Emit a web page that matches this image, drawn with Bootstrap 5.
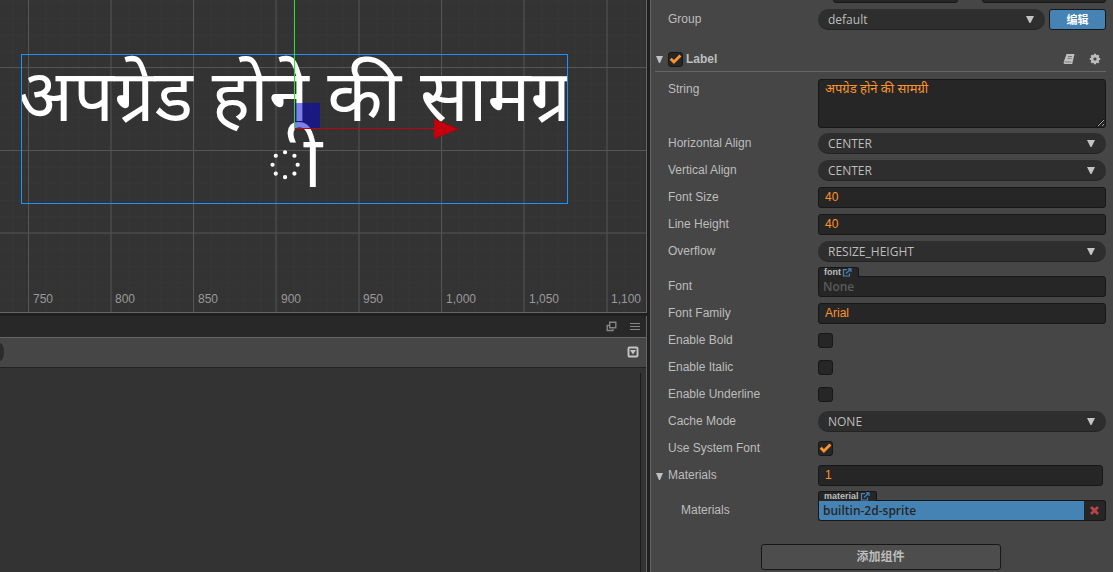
<!DOCTYPE html>
<html lang="zh-CN">
<head>
<meta charset="utf-8">
<meta name="viewport" content="width=device-width, initial-scale=1">
<title>Label inspector</title>
<link href="https://cdn.jsdelivr.net/npm/bootstrap@5.3.0/dist/css/bootstrap.min.css" rel="stylesheet">
<script src="https://cdn.jsdelivr.net/npm/bootstrap@5.3.0/dist/js/bootstrap.bundle.min.js"></script>
<style>
  :root { --line:#656565; --panel:#464646; --field:#262626; --edge:#171717; --orange:#fd942b; --blue:#4683b5; --txt:#bdbdbd; }
  body { background:#1e1f1e; color:var(--txt); font:12px/20px "Liberation Sans", Arial, sans-serif; }
  .workspace { gap:3px; }
  .left-col { gap:3px; }
  .scene { background:#333; border:solid var(--line); border-width:0 1px 1px 0; min-height:200px; }
  .scene svg { inset:0; }
  .scene text { font:12px "Liberation Sans", Arial, sans-serif; fill:#999; }
  .label-node { left:21px; top:54px; width:547px; height:150px; padding-top:15px; border:1px solid #1e90ff; color:#fff; }
  .label-node p { font:72px/66px "Noto Sans Devanagari", "Noto Sans", sans-serif; }
  .console-pane { flex:0 0 256px; border-right:1px solid var(--line); }
  .tab-strip { height:22px; background:#282828; border-bottom:1px solid var(--line); padding-right:6px; gap:13px; }
  .tool-strip { height:30px; background:var(--panel); border-bottom:1px solid #222; padding:0 7px 2px 0; }
  .pill-end { width:4px; height:18px; background:#2b2b2b; border-radius:0 4px 4px 0 / 0 9px 9px 0; }
  .log-area { background:#333; padding:5px 5px 0 0; }
  .log-area div { border-right:1px solid #1c1c1c; }
  .icon-btn { border:0; padding:0; background:none; display:flex; color:#a5a5a5; }
  .inspector { flex:0 0 463px; background:var(--panel); border-left:1px solid var(--line); padding:0 7px 0 4px; }
  .prop { display:grid; grid-template-columns:150px minmax(0,1fr); padding-left:13px; margin-bottom:6px; align-items:start; }
  .prop > label { min-height:21px; }
  .prop.tall { margin-bottom:5px; }
  .prop.sub > label { padding-left:13px; }
  .prop.tabbed { margin-top:-1px; }
  .prop.tabbed > label { padding-top:9px; }
  .field { display:block; width:100%; height:21px; padding:0 6px 1px; background:var(--field); border:1px solid var(--edge); border-radius:3px; color:var(--orange); line-height:18px; }
  textarea.field { height:49px; resize:vertical; padding:1px 6px; font-family:"Noto Sans Devanagari", "Noto Sans", sans-serif; font-size:13px; }
  .picker { display:block; width:100%; height:21px; padding:1px 10px 0; appearance:none; border:0; border-bottom:1px solid #232323; border-radius:11px; color:var(--txt); font:12px/20px "Open Sans", sans-serif;
    background:#2e2e2e url("data:image/svg+xml,%3Csvg xmlns='http://www.w3.org/2000/svg' width='8' height='7'%3E%3Cpath fill='%23c4c4c4' d='M0 0h8L4.500 7H3.500z'/%3E%3C/svg%3E") no-repeat right 11px top 7px; }
  .tick { display:block; margin:3px 0 0; width:15px; height:15px; flex:none; appearance:none; background:var(--field) center/13px no-repeat; border:1px solid var(--edge); border-radius:3px; }
  .tick:checked { background-image:url("data:image/svg+xml,%3Csvg xmlns='http://www.w3.org/2000/svg' viewBox='0 0 13 13'%3E%3Cpath fill='none' stroke='%23fd942b' stroke-width='2.800' d='M1.700 5.800l3.200 3.200L11.400 2.500'/%3E%3C/svg%3E"); }
  .edit-btn { width:57px; height:21px; border:1px solid var(--edge); border-radius:3px; background:var(--blue); color:#fff; font:bold 11px/18px "Liberation Sans", "Noto Sans CJK SC", sans-serif; }
  .cut-row { height:3px; padding-left:178px; gap:24px; margin-bottom:6px; }
  .comp-head { height:25px; border-bottom:1px solid var(--line); margin:17px 0 7px; }
  .arrow { width:9px; margin:0 4px 0 0; }
  .comp-head .tick { margin:0 3px 0 0; }
  .head-icons { gap:14px; padding-right:5px; }
  .array-size { padding:0 3px 0 0; }
  .asset-tab { width:max-content; height:10px; padding:0 6px 0 5px; background:var(--field); border:1px solid var(--edge); border-bottom:0; border-radius:3px 3px 0 0; font:bold 9px/8px "Liberation Sans", Arial, sans-serif; gap:1px; margin-bottom:-1px; position:relative; }
  .asset { font:600 12px/19px "Open Sans", sans-serif; padding:0 4px; border-radius:0 3px 3px 3px; }
  .asset::placeholder { color:#5b5b5b; opacity:1; }
  .asset.filled { background:var(--blue); color:#262626; border-radius:0 0 0 3px; border-right:0; }
  .clear-btn { width:22px; height:21px; flex:none; border:1px solid var(--edge); border-left:0; border-radius:0 3px 3px 0; background:var(--field); padding:0; display:flex; align-items:center; justify-content:center; }
  .add-btn { width:240px; height:26px; margin:23px auto 0; border:1px solid var(--edge); border-radius:3px; background:#4d4d4d; color:var(--txt); font:bold 12px/24px "Liberation Sans", "Noto Sans CJK SC", sans-serif; }
</style>
</head>
<body>
<div class="workspace d-flex vh-100 overflow-hidden">
  <main class="left-col d-flex flex-column flex-grow-1 overflow-hidden">
    <section class="scene position-relative flex-grow-1 overflow-hidden" aria-label="Scene">
      <svg class="position-absolute w-100 h-100" aria-hidden="true">
        <defs>
          <pattern id="minor" x="28.500" y="1.500" width="16.530" height="16.530" patternUnits="userSpaceOnUse"><path d="M.5 0V17M0 .5H17" stroke="#363636"/></pattern>
        </defs>
        <rect width="100%" height="100%" fill="url(#minor)"/>
        <path d="M28.500 0V900M111 0V900M193.500 0V900M276 0V900M359 0V900M441.500 0V900M524 0V900M607 0V900M0 67.500H2000M0 150.500H2000M0 233H2000" stroke="#555" fill="none"/>
      </svg>
      <svg class="position-absolute w-100 h-100">
        <text x="33" y="303">750</text><text x="115" y="303">800</text><text x="198" y="303">850</text><text x="281" y="303">900</text><text x="363" y="303">950</text><text x="446" y="303">1,000</text><text x="529" y="303">1,050</text><text x="611" y="303">1,100</text>
      </svg>
      <div class="label-node position-absolute overflow-hidden">
        <p class="m-0 text-nowrap d-flex flex-column align-items-center"><span>अपग्रेड होने की सामग्र</span><span>ी</span></p>
      </div>
      <svg class="position-absolute w-100 h-100" aria-hidden="true">
        <rect x="294" y="103" width="26" height="26" fill="#0000d0" fill-opacity=".5"/>
        <path d="M294.500 0V129" stroke="#2be52b"/>
        <path d="M295 128.500H436" stroke="#c4000f"/>
        <path d="M434 119L459 129L434 139z" fill="#c4000f"/><path d="M434 119L459 129L434 139" fill="none" stroke="#7d1414" stroke-width=".8"/>
      </svg>
    </section>
    <section class="console-pane d-flex flex-column" aria-label="Console">
      <div class="tab-strip d-flex align-items-center justify-content-end">
        <button class="icon-btn" aria-label="Pop out"><svg width="11" height="11" viewBox="0 0 11 11" fill="none" stroke="#858585" stroke-width="1.400"><path d="M3.700 1.200H9.800V6.800H3.700zM3 4.500H1.200V9.500H7V8"/></svg></button>
        <button class="icon-btn" aria-label="Menu"><svg width="10" height="9" viewBox="0 0 10 9" stroke="#858585"><path d="M0 1.500H10M0 4.500H10M0 7.500H10"/></svg></button>
      </div>
      <div class="tool-strip d-flex align-items-center justify-content-between">
        <span class="pill-end"></span>
        <button class="icon-btn" aria-label="Collapse"><svg width="12" height="12" viewBox="0 0 12 12"><rect x="1.500" y="1.500" width="9" height="9" rx="1" fill="none" stroke="#c4c4c4" stroke-width="1.900"/><path d="M3 4H9L6 8.500z" fill="#c4c4c4"/></svg></button>
      </div>
      <div class="log-area flex-grow-1"><div class="h-100"></div></div>
    </section>
  </main>

  <aside class="inspector overflow-hidden" aria-label="Inspector">
    <div class="cut-row d-flex align-items-end overflow-hidden">
      <input class="field" aria-label="Skew X"><input class="field" aria-label="Skew Y">
    </div>
    <div class="prop"><label for="group">Group</label>
      <div class="d-flex"><select id="group" class="picker me-1"><option>default</option></select><button class="edit-btn flex-shrink-0 p-0">编辑</button></div></div>

    <div class="comp-head d-flex align-items-center">
      <svg class="arrow" height="7" viewBox="0 0 9 7"><path d="M1 0H8L5 7H4z" fill="#c0c0c0"/></svg>
      <input type="checkbox" class="tick" id="label-on" checked>
      <label class="fw-bold me-auto" for="label-on">Label</label>
      <div class="head-icons d-flex">
        <button class="icon-btn" aria-label="Help"><svg width="12" height="12" viewBox="0 0 12 12"><path d="M3.500 1H11.500L9.200 11H1.500Q.200 10.500.700 9z" fill="#c0c0c0"/><path d="M5 3.500H9M4.500 5.300H8.600M1.800 9H8.300" stroke="#5a5a5a" stroke-width=".7" fill="none"/></svg></button>
        <button class="icon-btn" aria-label="Settings"><svg width="12" height="12" viewBox="-6 -6 12 12"><circle r="2.900" fill="none" stroke="#bdbdbd" stroke-width="2.600"/><path d="M0-5.200V-3.500M0 5.200V3.500M-5.200 0H-3.500M5.200 0H3.500M-3.700-3.700L-2.600-2.600M3.700 3.700L2.600 2.600M3.700-3.700L2.600-2.600M-3.700 3.700L-2.600 2.600" stroke="#bdbdbd" stroke-width="2.200"/></svg></button>
      </div>
    </div>

    <div class="prop tall"><label for="string">String</label><textarea id="string" class="field">अपग्रेड होने की सामग्री</textarea></div>
    <div class="prop"><label for="ha">Horizontal Align</label><select id="ha" class="picker"><option>CENTER</option></select></div>
    <div class="prop"><label for="va">Vertical Align</label><select id="va" class="picker"><option>CENTER</option></select></div>
    <div class="prop"><label for="fs">Font Size</label><input id="fs" class="field" value="40"></div>
    <div class="prop"><label for="lh">Line Height</label><input id="lh" class="field" value="40"></div>
    <div class="prop"><label for="of">Overflow</label><select id="of" class="picker"><option>RESIZE_HEIGHT</option></select></div>
    <div class="prop tabbed"><label for="font">Font</label>
      <div><div class="asset-tab d-flex"><span>font</span><svg width="10" height="9" viewBox="0 0 10 9" fill="none" stroke="#4683b5" stroke-width="1.200"><path d="M5 1.600H1.500V8H7.500V5.500M4 5.500L8.500 1.200M6 .8H9V4"/></svg></div>
      <input id="font" class="field asset" placeholder="None"></div></div>
    <div class="prop"><label for="ff">Font Family</label><input id="ff" class="field" value="Arial"></div>
    <div class="prop"><label for="eb">Enable Bold</label><input type="checkbox" id="eb" class="tick"></div>
    <div class="prop"><label for="ei">Enable Italic</label><input type="checkbox" id="ei" class="tick"></div>
    <div class="prop"><label for="eu">Enable Underline</label><input type="checkbox" id="eu" class="tick"></div>
    <div class="prop"><label for="cm">Cache Mode</label><select id="cm" class="picker"><option>NONE</option></select></div>
    <div class="prop"><label for="sf">Use System Font</label><input type="checkbox" id="sf" class="tick" checked></div>
    <div class="d-flex align-items-start">
      <svg class="arrow mt-2" height="7" viewBox="0 0 9 7"><path d="M1 0H8L5 7H4z" fill="#c0c0c0"/></svg>
      <div class="prop array-size flex-grow-1"><label for="mc">Materials</label><input id="mc" class="field" value="1"></div>
    </div>
    <div class="prop tabbed sub"><label for="mat">Materials</label>
      <div><div class="asset-tab d-flex"><span>material</span><svg width="10" height="9" viewBox="0 0 10 9" fill="none" stroke="#4683b5" stroke-width="1.200"><path d="M5 1.600H1.500V8H7.500V5.500M4 5.500L8.500 1.200M6 .8H9V4"/></svg></div>
      <div class="d-flex"><input id="mat" class="field asset filled" value="builtin-2d-sprite"><button class="clear-btn" aria-label="Clear material"><svg width="9" height="9" viewBox="0 0 9 9"><path d="M1 1L8 8M8 1L1 8" stroke="#b9434a" stroke-width="2.800"/></svg></button></div></div></div>
    <button class="add-btn d-block p-0">添加组件</button>
  </aside>
</div>
</body>
</html>
